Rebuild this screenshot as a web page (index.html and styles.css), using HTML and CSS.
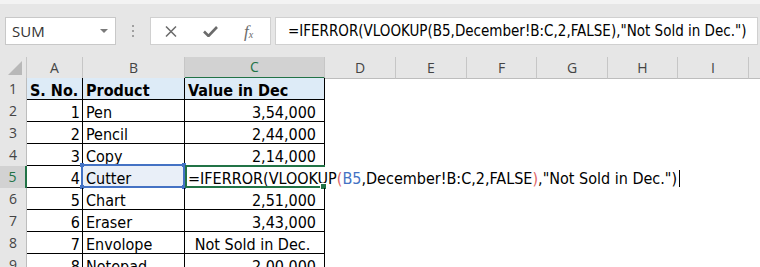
FILE: index.html
```html
<!DOCTYPE html>
<html lang="en">
<head>
  <meta charset="UTF-8">
  <title>VLOOKUP with IFERROR</title>
  <link rel="stylesheet" href="styles.css">
</head>
<body>
  <div class="top-edge"></div>

  <div class="formula-bar">
    <div class="name-box">
      <span>SUM</span>
      <span class="caret"></span>
    </div>
    <div class="grip"><i></i><i></i><i></i></div>
    <div class="fx-buttons">
      <svg class="icon-x" width="12" height="11" viewBox="0 0 12 11">
        <path d="M1 0.5 L11 10.5 M11 0.5 L1 10.5" stroke="#6b6b6b" stroke-width="1.5" fill="none"/>
      </svg>
      <svg class="icon-check" width="15" height="11" viewBox="0 0 15 11">
        <path d="M1 5.5 L5.5 10 L14 1" stroke="#6b6b6b" stroke-width="2.6" fill="none"/>
      </svg>
      <span class="fx"><i>f</i><sub>x</sub></span>
    </div>
    <div class="formula-input">=IFERROR(VLOOKUP(B5,December!B:C,2,FALSE),"Not Sold in Dec.")</div>
  </div>

  <div class="sheet">
    <div class="sheet-row head-row">
      <div class="corner">
        <svg width="14" height="14" viewBox="0 0 14 14"><polygon points="14,0 14,14 0,14" fill="#b8b8b8"/></svg>
      </div>
      <div class="col-head">A</div>
      <div class="col-head">B</div>
      <div class="col-head selected">C</div>
      <div class="col-head">D</div>
      <div class="col-head">E</div>
      <div class="col-head">F</div>
      <div class="col-head">G</div>
      <div class="col-head">H</div>
      <div class="col-head">I</div>
      <div class="col-head last"></div>
    </div>

    <div class="sheet-row title-row">
      <div class="row-head">1</div>
      <div class="cell bold">S. No.</div>
      <div class="cell bold">Product</div>
      <div class="cell bold">Value in Dec</div>
    </div>

    <div class="sheet-row">
      <div class="row-head">2</div>
      <div class="cell num">1</div>
      <div class="cell">Pen</div>
      <div class="cell value">3,54,000</div>
    </div>

    <div class="sheet-row">
      <div class="row-head">3</div>
      <div class="cell num">2</div>
      <div class="cell">Pencil</div>
      <div class="cell value">2,44,000</div>
    </div>

    <div class="sheet-row">
      <div class="row-head">4</div>
      <div class="cell num">3</div>
      <div class="cell">Copy</div>
      <div class="cell value">2,14,000</div>
    </div>

    <div class="sheet-row edit-row">
      <div class="row-head selected">5</div>
      <div class="cell num">4</div>
      <div class="cell ref-cell">
        Cutter
        <span class="ref-box">
          <i class="handle tl"></i><i class="handle tr"></i>
          <i class="handle bl"></i><i class="handle br"></i>
        </span>
      </div>
      <div class="cell active">=IFERROR(VLOOKUP<span class="paren">(</span><span class="ref">B5</span>,December!B:C,2,FALSE<span class="paren">)</span>,"Not Sold in Dec.")<span class="cursor"></span><span class="fill-handle"></span></div>
    </div>

    <div class="sheet-row">
      <div class="row-head">6</div>
      <div class="cell num">5</div>
      <div class="cell">Chart</div>
      <div class="cell value">2,51,000</div>
    </div>

    <div class="sheet-row">
      <div class="row-head">7</div>
      <div class="cell num">6</div>
      <div class="cell">Eraser</div>
      <div class="cell value">3,43,000</div>
    </div>

    <div class="sheet-row">
      <div class="row-head">8</div>
      <div class="cell num">7</div>
      <div class="cell">Envolope</div>
      <div class="cell center">Not Sold in Dec.</div>
    </div>

    <div class="sheet-row">
      <div class="row-head">9</div>
      <div class="cell num">8</div>
      <div class="cell">Notepad</div>
      <div class="cell value">2,00,000</div>
    </div>
  </div>
</body>
</html>
```

FILE: styles.css
```css
body {
  margin: 0;
  height: 267px;
  overflow: hidden;
  background-color: #fff;
  font-family: "DejaVu Sans Condensed", "DejaVu Sans", sans-serif;
  color: #000;
}

.top-edge {
  height: 4px;
  background-color: #f3f3f3;
}

/* formula bar */
.formula-bar {
  display: flex;
  align-items: flex-start;
  height: 53px;
  box-sizing: border-box;
  padding: 13px 2px 0 5px;
  background-color: #e6e6e6;
}

.name-box {
  display: flex;
  align-items: center;
  justify-content: space-between;
  width: 111px;
  height: 28px;
  box-sizing: border-box;
  padding: 0 7px 0 6px;
  background-color: #fff;
  border: 1px solid #c8c8c8;
  font-family: "Open Sans", sans-serif;
  font-size: 15px;
  color: #333;
}

.caret {
  width: 0;
  height: 0;
  border-left: 4px solid transparent;
  border-right: 4px solid transparent;
  border-top: 4px solid #7a7a7a;
}

.grip {
  display: flex;
  flex-direction: column;
  gap: 3px;
  height: 28px;
  justify-content: center;
  margin: 0 16px 0 16px;
}

.grip i {
  display: block;
  width: 2px;
  height: 2px;
  background-color: #a0a0a0;
}

.fx-buttons {
  display: flex;
  align-items: center;
  gap: 26px;
  width: 121px;
  height: 28px;
  box-sizing: border-box;
  padding-left: 14px;
  background-color: #fff;
  border: 1px solid #d0d0d0;
}

.fx {
  font-family: "Liberation Serif", serif;
  font-size: 17px;
  color: #6b6b6b;
  line-height: 1;
}

.fx sub {
  font-size: 10px;
  font-style: italic;
  vertical-align: -1px;
}

.formula-input {
  flex: 1;
  height: 28px;
  box-sizing: border-box;
  margin-left: 4px;
  padding-left: 12px;
  background-color: #fff;
  border: 1px solid #d0d0d0;
  font-size: 15px;
  line-height: 27px;
  white-space: nowrap;
  overflow: hidden;
}

/* sheet grid */
.sheet-row {
  display: grid;
  grid-template-columns: 27px 56px 102px 140px 71px 71px 70px 71px 70px 71px 1fr;
  height: 22px;
}

.head-row {
  height: 21px;
  background-color: #e6e6e6;
}

.corner {
  display: flex;
  align-items: flex-end;
  justify-content: flex-end;
  padding: 0 4px 3px 0;
  border-right: 1px solid #c6c6c6;
  border-bottom: 1px solid #bdbdbd;
}

.col-head {
  border-right: 1px solid #c6c6c6;
  border-bottom: 1px solid #bdbdbd;
  text-align: center;
  font-family: "Open Sans", sans-serif;
  font-size: 14px;
  line-height: 21px;
  color: #444;
}

.col-head.selected {
  background-color: #d2d2d2;
  border-bottom: 2px solid #217346;
  color: #217346;
  line-height: 20px;
}

.col-head.last {
  border-right: none;
}

.row-head {
  background-color: #e6e6e6;
  border-right: 1px solid #bdbdbd;
  border-bottom: 1px solid #d0d0d0;
  text-align: center;
  font-family: "Open Sans", sans-serif;
  font-size: 14px;
  line-height: 22px;
  color: #444;
}

.row-head.selected {
  background-color: #d2d2d2;
  border-right: 2px solid #217346;
  color: #217346;
}

.cell {
  position: relative;
  border-right: 1px solid #000;
  border-bottom: 1px solid #000;
  padding-left: 3px;
  font-size: 16px;
  line-height: 25px;
  height: 22px;
  box-sizing: border-box;
  white-space: nowrap;
}

.title-row .cell {
  background-color: #ddebf7;
}

.bold {
  font-weight: bold;
}

.num {
  text-align: right;
  padding: 0 2px 0 0;
}

.value {
  text-align: right;
  padding: 0 8px 0 0;
}

.center {
  text-align: center;
  padding: 0 4px 0 0;
}

/* cell being edited and its range reference */
.ref-cell {
  background-color: #e9eff8;
}

.ref-box {
  position: absolute;
  top: -2px;
  left: -2px;
  right: -1px;
  bottom: -1px;
  border: 2px solid #4472c4;
}

.handle {
  position: absolute;
  width: 4px;
  height: 4px;
  background-color: #4472c4;
}

.handle.tl { top: -3px; left: -3px; }
.handle.tr { top: -3px; right: -3px; }
.handle.bl { bottom: -3px; left: -3px; }
.handle.br { bottom: -3px; right: -3px; }

.active {
  border: none;
  padding-left: 3px;
  overflow: visible;
}

.active::before {
  content: "";
  position: absolute;
  top: -1px;
  left: 0;
  right: 0;
  bottom: 0;
  border-top: 2px solid #217346;
  border-left: 2px solid #217346;
  border-bottom: 2px solid #217346;
}

.paren {
  color: #e06666;
}

.ref {
  color: #4472c4;
}

.cursor {
  display: inline-block;
  width: 1px;
  height: 17px;
  margin-left: 2px;
  vertical-align: -3px;
  background-color: #000;
}

.fill-handle {
  position: absolute;
  right: -2px;
  bottom: -2px;
  width: 5px;
  height: 5px;
  background-color: #217346;
  border: 1px solid #fff;
}
```
